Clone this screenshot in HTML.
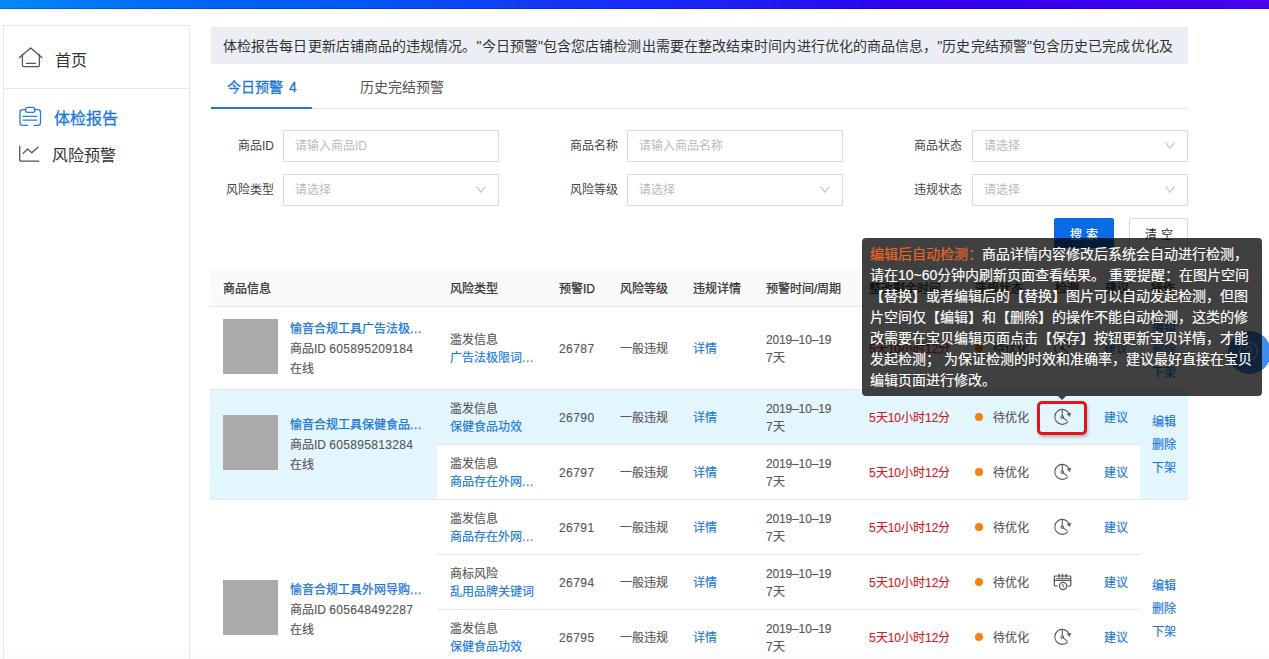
<!DOCTYPE html>
<html lang="zh-CN"><head><meta charset="utf-8">
<style>
html,body{margin:0;padding:0}
body{width:1269px;height:659px;overflow:hidden;position:relative;background:#fff;font-family:"Liberation Sans",sans-serif;color:#333}
.a{position:absolute}
.t{position:absolute;white-space:nowrap}
.f12{font-size:12px;line-height:18px}
.f14{font-size:14px;line-height:20px}
.f16{font-size:16px;line-height:22px}
.blue{color:#1a78d8}
.gray{color:#585858}
.line{position:absolute;height:1px;background:#e8e8e8}
.inp{position:absolute;box-sizing:border-box;height:32px;width:216px;border:1px solid #dcdcdc;background:#fff}
.ph{position:absolute;left:11px;top:7px;font-size:12px;line-height:16px;color:#bbb;white-space:nowrap}
.chev{position:absolute;right:12px;top:11px;width:10px;height:8px}
.img{position:absolute;width:55px;height:55px;background:#aaa}
.red{color:#d01c28}
.dot{position:absolute;width:8px;height:8px;border-radius:50%;background:#f8800e}
.th{margin-top:1px;font-size:12px;line-height:20px;color:#333;-webkit-text-stroke:0.25px #333}
.td{margin-top:1px;font-size:12px;line-height:20px;-webkit-text-stroke:0.15px currentColor}
.med{-webkit-text-stroke:0.3px currentColor}
.title{color:#1b74d4;-webkit-text-stroke:0.25px #1b74d4}
</style></head>
<body>
<!-- top gradient bar -->
<div class="a" style="left:0;top:0;width:1269px;height:9px;background:linear-gradient(90deg,rgb(0,136,245) 0%,rgb(0,100,248) 16%,rgb(0,88,250) 28%,rgb(21,53,245) 44%,rgb(26,34,245) 57%,rgb(48,0,240) 71%,rgb(56,0,239) 83%,rgb(74,0,240) 100%)"></div>

<div class="a" style="left:0;top:8px;width:1269px;height:1px;background:rgba(0,0,40,0.22)"></div>
<div class="a" style="left:0;top:9px;width:1269px;height:1px;background:#f2fdff"></div>
<!-- sidebar -->
<div class="a" style="left:3px;top:25px;width:185px;height:660px;border:1px solid #e8e8e8;box-sizing:content-box"></div>
<div class="line" style="left:4px;top:88px;width:185px"></div>

<svg class="a" style="left:0;top:0" width="200" height="200" viewBox="0 0 200 200">
  <!-- house -->
  <g fill="none" stroke="#555" stroke-width="1.3" stroke-linecap="round" stroke-linejoin="round">
    <path d="M19.5 57.5 L30.7 48 L41.8 57.5"/>
    <path d="M22.4 54.5 V65 Q22.4 66.6 24 66.6 H37.8 Q39.4 66.6 39.4 65 V54.5"/>
    <path d="M26.3 63.4 H35.4"/>
  </g>
  <!-- clipboard (blue) -->
  <g fill="none" stroke="#2a7bd3" stroke-width="1.3" stroke-linecap="round" stroke-linejoin="round">
    <path d="M25.5 109.6 H22.6 Q20 109.6 20 112.2 V122.7 Q20 125.3 22.6 125.3 H27.7"/>
    <path d="M34.9 109.6 H37.9 Q40.5 109.6 40.5 112.2 V122.7 Q40.5 125.3 37.9 125.3 H33.9"/>
    <rect x="25.5" y="107.4" width="9.5" height="5" rx="2.5"/>
    <path d="M23.2 116.4 H36.9 M23.2 120.1 H36.9"/>
  </g>
  <!-- trend -->
  <g fill="none" stroke="#555" stroke-width="1.3" stroke-linecap="round" stroke-linejoin="round">
    <path d="M19.7 146.3 V159.2 Q19.7 161.2 21.7 161.2 H38.8"/>
    <path d="M23.3 153.4 L27.5 148.9 L31.8 152.7 L38 147.2"/>
  </g>
</svg>
<div class="t f16" style="left:55px;top:50px">首页</div>
<div class="t f16 blue med" style="left:54px;top:108px">体检报告</div>
<div class="t f16" style="left:52px;top:145px">风险预警</div>

<!-- notice -->
<div class="a" style="left:211px;top:27px;width:977px;height:37px;background:#ebeff5;overflow:hidden">
  <div class="t f14" style="left:12px;top:9px;color:#333;letter-spacing:0.085px">体检报告每日更新店铺商品的违规情况。"今日预警"包含您店铺检测出需要在整改结束时间内进行优化的商品信息，"历史完结预警"包含历史已完成优化及</div>
</div>

<!-- tabs -->
<div class="line" style="left:210px;top:108px;width:978px"></div>
<div class="a" style="left:211px;top:107px;width:101px;height:2px;background:#1f78d1"></div>
<div class="t f14 blue med" style="left:227px;top:77px">今日预警<span style="margin-left:6px">4</span></div>
<div class="t f14" style="left:360px;top:77px;color:#555">历史完结预警</div>

<!-- form -->
<div class="t f12" style="right:995px;top:137px;color:#444">商品ID</div>
<div class="inp" style="left:283px;top:130px"><div class="ph">请输入商品ID</div></div>
<div class="t f12" style="right:651px;top:137px;color:#444">商品名称</div>
<div class="inp" style="left:627px;top:130px"><div class="ph">请输入商品名称</div></div>
<div class="t f12" style="right:307px;top:137px;color:#444">商品状态</div>
<div class="inp" style="left:972px;top:130px"><div class="ph">请选择</div><svg class="chev" viewBox="0 0 10 8"><path d="M0.6 0.4 L5 6.4 L9.4 0.4" fill="none" stroke="#c4c4c4" stroke-width="1.1"/></svg></div>

<div class="t f12" style="right:995px;top:181px;color:#444">风险类型</div>
<div class="inp" style="left:283px;top:174px"><div class="ph">请选择</div><svg class="chev" viewBox="0 0 10 8"><path d="M0.6 0.4 L5 6.4 L9.4 0.4" fill="none" stroke="#c4c4c4" stroke-width="1.1"/></svg></div>
<div class="t f12" style="right:651px;top:181px;color:#444">风险等级</div>
<div class="inp" style="left:627px;top:174px"><div class="ph">请选择</div><svg class="chev" viewBox="0 0 10 8"><path d="M0.6 0.4 L5 6.4 L9.4 0.4" fill="none" stroke="#c4c4c4" stroke-width="1.1"/></svg></div>
<div class="t f12" style="right:307px;top:181px;color:#444">违规状态</div>
<div class="inp" style="left:972px;top:174px"><div class="ph">请选择</div><svg class="chev" viewBox="0 0 10 8"><path d="M0.6 0.4 L5 6.4 L9.4 0.4" fill="none" stroke="#c4c4c4" stroke-width="1.1"/></svg></div>

<!-- buttons -->
<div class="a" style="left:1054px;top:218px;width:60px;height:30px;background:#0a6be6;border-radius:2px"></div>
<div class="t f12" style="-webkit-text-stroke:0.2px #fff;left:1054px;top:226px;width:60px;text-align:center;color:#fff;letter-spacing:4px;text-indent:4px">搜索</div>
<div class="a" style="left:1129px;top:218px;width:59px;height:30px;box-sizing:border-box;border:1px solid #d9d9d9;border-radius:2px;background:#fff"></div>
<div class="t f12" style="left:1129px;top:226px;width:59px;text-align:center;color:#333;letter-spacing:4px;text-indent:4px">清空</div>

<!-- TABLE -->
<!-- header -->
<div class="a" style="left:210px;top:269px;width:978px;height:37px;background:#fafafa"></div>
<div class="line" style="left:210px;top:306px;width:978px"></div>
<div class="t th" style="left:223px;top:278px">商品信息</div>
<div class="t th" style="left:450px;top:278px">风险类型</div>
<div class="t th" style="left:559px;top:278px">预警ID</div>
<div class="t th" style="left:620px;top:278px">风险等级</div>
<div class="t th" style="left:693px;top:278px">违规详情</div>
<div class="t th" style="left:766px;top:278px">预警时间/周期</div>
<div class="t th" style="left:869px;top:278px">整改剩余时间</div>
<div class="t th" style="left:975px;top:278px">违规状态</div>
<div class="t th" style="left:1055px;top:278px">检测</div>
<div class="t th" style="left:1105px;top:278px">建议</div>
<div class="t th" style="left:1151px;top:278px">操作</div>

<!-- row 1 -->
<div class="line" style="left:210px;top:389px;width:978px"></div>
<div class="img" style="left:223px;top:319px"></div>
<div class="t td title" style="left:290px;top:318px">愉音合规工具广告法极<span style="letter-spacing:0.7px">...</span></div>
<div class="t td gray" style="left:290px;top:338px">商品ID <span style="letter-spacing:0.32px">605895209184</span></div>
<div class="t td gray" style="left:290px;top:358px">在线</div>
<div class="t td gray" style="left:450px;top:329px">滥发信息</div>
<div class="t td blue" style="left:450px;top:347px">广告法极限词<span style="letter-spacing:0.7px">...</span></div>
<div class="t td gray" style="left:559px;top:338px;letter-spacing:0.45px">26787</div>
<div class="t td gray" style="left:620px;top:338px">一般违规</div>
<div class="t td blue" style="left:693px;top:338px">详情</div>
<div class="t td gray" style="left:766px;top:329px;letter-spacing:-0.15px">2019–10–19</div>
<div class="t td gray" style="left:766px;top:347px">7天</div>
<div class="t td red" style="left:869px;top:338px">5天10小时12分</div>
<div class="dot" style="left:975px;top:344px"></div>
<div class="t td gray" style="left:993px;top:338px">待优化</div>
<div class="t td blue" style="left:1104px;top:338px">建议</div>
<div class="t td blue" style="left:1152px;top:316px">编辑</div>
<div class="t td blue" style="left:1152px;top:339px">删除</div>
<div class="t td blue" style="left:1152px;top:362px">下架</div>

<!-- group 2 -->
<div class="a" style="left:210px;top:390px;width:227px;height:109px;background:#e3f6fd"></div>
<div class="a" style="left:437px;top:390px;width:703px;height:54px;background:#e3f6fd"></div>
<div class="a" style="left:1140px;top:390px;width:48px;height:109px;background:#e3f6fd"></div>
<div class="line" style="left:437px;top:444px;width:703px"></div>
<div class="line" style="left:210px;top:499px;width:978px"></div>
<div class="img" style="left:223px;top:415px"></div>
<div class="t td title" style="left:290px;top:414px">愉音合规工具保健食品<span style="letter-spacing:0.7px">...</span></div>
<div class="t td gray" style="left:290px;top:434px">商品ID <span style="letter-spacing:0.32px">605895813284</span></div>
<div class="t td gray" style="left:290px;top:454px">在线</div>
<!-- sub1 -->
<div class="t td gray" style="left:450px;top:398px">滥发信息</div>
<div class="t td blue" style="left:450px;top:416px">保健食品功效</div>
<div class="t td gray" style="left:559px;top:407px;letter-spacing:0.45px">26790</div>
<div class="t td gray" style="left:620px;top:407px">一般违规</div>
<div class="t td blue" style="left:693px;top:407px">详情</div>
<div class="t td gray" style="left:766px;top:398px;letter-spacing:-0.15px">2019–10–19</div>
<div class="t td gray" style="left:766px;top:416px">7天</div>
<div class="t td red" style="left:869px;top:407px">5天10小时12分</div>
<div class="dot" style="left:975px;top:413px"></div>
<div class="t td gray" style="left:993px;top:407px">待优化</div>
<div class="t td blue" style="left:1104px;top:407px">建议</div>
<!-- sub2 -->
<div class="t td gray" style="left:450px;top:453px">滥发信息</div>
<div class="t td blue" style="left:450px;top:471px">商品存在外网<span style="letter-spacing:0.7px">...</span></div>
<div class="t td gray" style="left:559px;top:462px;letter-spacing:0.45px">26797</div>
<div class="t td gray" style="left:620px;top:462px">一般违规</div>
<div class="t td blue" style="left:693px;top:462px">详情</div>
<div class="t td gray" style="left:766px;top:453px;letter-spacing:-0.15px">2019–10–19</div>
<div class="t td gray" style="left:766px;top:471px">7天</div>
<div class="t td red" style="left:869px;top:462px">5天10小时12分</div>
<div class="dot" style="left:975px;top:468px"></div>
<div class="t td gray" style="left:993px;top:462px">待优化</div>
<div class="t td blue" style="left:1104px;top:462px">建议</div>
<div class="t td blue" style="left:1152px;top:411px">编辑</div>
<div class="t td blue" style="left:1152px;top:434px">删除</div>
<div class="t td blue" style="left:1152px;top:457px">下架</div>

<!-- group 3 -->
<div class="line" style="left:437px;top:554px;width:703px"></div>
<div class="line" style="left:437px;top:609px;width:703px"></div>
<div class="img" style="left:223px;top:580px"></div>
<div class="t td title" style="left:290px;top:579px">愉音合规工具外网导购<span style="letter-spacing:0.7px">...</span></div>
<div class="t td gray" style="left:290px;top:599px">商品ID <span style="letter-spacing:0.32px">605648492287</span></div>
<div class="t td gray" style="left:290px;top:619px">在线</div>
<!-- sub1 -->
<div class="t td gray" style="left:450px;top:508px">滥发信息</div>
<div class="t td blue" style="left:450px;top:526px">商品存在外网<span style="letter-spacing:0.7px">...</span></div>
<div class="t td gray" style="left:559px;top:517px;letter-spacing:0.45px">26791</div>
<div class="t td gray" style="left:620px;top:517px">一般违规</div>
<div class="t td blue" style="left:693px;top:517px">详情</div>
<div class="t td gray" style="left:766px;top:508px;letter-spacing:-0.15px">2019–10–19</div>
<div class="t td gray" style="left:766px;top:526px">7天</div>
<div class="t td red" style="left:869px;top:517px">5天10小时12分</div>
<div class="dot" style="left:975px;top:523px"></div>
<div class="t td gray" style="left:993px;top:517px">待优化</div>
<div class="t td blue" style="left:1104px;top:517px">建议</div>
<!-- sub2 -->
<div class="t td gray" style="left:450px;top:563px">商标风险</div>
<div class="t td blue" style="left:450px;top:581px">乱用品牌关键词</div>
<div class="t td gray" style="left:559px;top:572px;letter-spacing:0.45px">26794</div>
<div class="t td gray" style="left:620px;top:572px">一般违规</div>
<div class="t td blue" style="left:693px;top:572px">详情</div>
<div class="t td gray" style="left:766px;top:563px;letter-spacing:-0.15px">2019–10–19</div>
<div class="t td gray" style="left:766px;top:581px">7天</div>
<div class="t td red" style="left:869px;top:572px">5天10小时12分</div>
<div class="dot" style="left:975px;top:578px"></div>
<div class="t td gray" style="left:993px;top:572px">待优化</div>
<div class="t td blue" style="left:1104px;top:572px">建议</div>
<!-- sub3 -->
<div class="t td gray" style="left:450px;top:618px">滥发信息</div>
<div class="t td blue" style="left:450px;top:636px">保健食品功效</div>
<div class="t td gray" style="left:559px;top:627px;letter-spacing:0.45px">26795</div>
<div class="t td gray" style="left:620px;top:627px">一般违规</div>
<div class="t td blue" style="left:693px;top:627px">详情</div>
<div class="t td gray" style="left:766px;top:618px;letter-spacing:-0.15px">2019–10–19</div>
<div class="t td gray" style="left:766px;top:636px">7天</div>
<div class="t td red" style="left:869px;top:627px">5天10小时12分</div>
<div class="dot" style="left:975px;top:633px"></div>
<div class="t td gray" style="left:993px;top:627px">待优化</div>
<div class="t td blue" style="left:1104px;top:627px">建议</div>
<div class="t td blue" style="left:1152px;top:575px">编辑</div>
<div class="t td blue" style="left:1152px;top:598px">删除</div>
<div class="t td blue" style="left:1152px;top:621px">下架</div>


<svg class="a" style="left:0;top:0" width="1269" height="659" viewBox="0 0 1269 659">
 <defs>
  <g id="clk" fill="none" stroke="#5a5a5a" stroke-width="1.1" stroke-linecap="round" stroke-linejoin="round">
   <path d="M5.3 5.2 A7.5 7.5 0 1 1 6.6 -3.6"/>
   <path d="M5.2 -2.9 L8.5 -3.8 L7.3 -0.7 Z" fill="#5a5a5a" stroke-width="0.7"/>
   <path d="M0 -7 V-1.3"/>
   <circle cx="0" cy="0" r="1.3"/>
   <path d="M0.9 0.9 L4.6 3.6"/>
  </g>
  <g id="cal" fill="none" stroke="#555" stroke-width="1.2" stroke-linecap="round" stroke-linejoin="round">
   <path d="M-5.3 10 H-7.2 Q-8.2 10 -8.2 9 V1 Q-8.2 0 -7.2 0 H7.3 Q8.3 0 8.3 1 V9 Q8.3 10 7.3 10 H5.3"/>
   <path d="M-6 2.6 H7" stroke-width="0.9"/>
   <path d="M-8.2 4.4 H8.3"/>
   <path d="M-3.5 -1.6 V1 M0 -1.6 V1 M3.7 -1.6 V1" stroke-width="1.4"/>
   <circle cx="0.6" cy="10" r="3.6"/>
   <path d="M0.4 8.3 V10.2 L1.6 11.3" stroke-width="1"/>
  </g>
 </defs>
 <use href="#clk" x="1062.3" y="348"/>
 <use href="#clk" x="1062.3" y="417"/>
 <use href="#clk" x="1062.3" y="472"/>
 <use href="#clk" x="1062.3" y="527"/>
 <use href="#cal" x="1062.5" y="576"/>
 <use href="#clk" x="1062.3" y="637"/>
</svg>
<!-- red highlight -->
<div class="a" style="left:1037px;top:401px;width:50px;height:34px;box-sizing:border-box;border:3px solid #e4141b;border-radius:5px;box-shadow:1px 2px 3px rgba(0,0,0,0.25)"></div>



<div class="a" style="left:0;top:650px;width:1269px;height:9px;background:rgba(0,0,0,0.012)"></div>
<!-- help button -->
<div class="a" style="left:1228px;top:331px;width:43px;height:43px;border-radius:50%;background:#3d8ef0"></div>
<svg class="a" style="left:1226px;top:331px" width="43" height="43" viewBox="0 0 43 43">
 <g fill="none" stroke="rgba(255,255,255,0.75)" stroke-width="1.3" stroke-linecap="round">
  <circle cx="22.5" cy="20.5" r="9"/>
  <path d="M19.7 18.3 Q19.7 15.6 22.5 15.6 Q25.3 15.6 25.3 18.2 Q25.3 20 22.5 21.2 V23"/>
 </g>
</svg>
<!-- tooltip -->
<div class="a" style="left:862px;top:238px;width:400px;height:158px;background:rgba(0,0,0,0.75);border-radius:4px"></div>
<div class="a" style="left:1058px;top:396px;width:0;height:0;border-left:4px solid transparent;border-right:4px solid transparent;border-top:4px solid rgba(0,0,0,0.75)"></div>
<div class="t" style="left:870px;top:244px;font-size:14px;line-height:21px;color:#fff;-webkit-text-stroke:0.15px currentColor"><span style="color:#ef6626">编辑后自动检测：</span>商品详情内容修改后系统会自动进行检测，<br>请在10~60分钟内刷新页面查看结果。 重要提醒：在图片空间<br>【替换】或者编辑后的【替换】图片可以自动发起检测，但图<br>片空间仅【编辑】和【删除】的操作不能自动检测，这类的修<br>改需要在宝贝编辑页面点击【保存】按钮更新宝贝详情，才能<br>发起检测； 为保证检测的时效和准确率，建议最好直接在宝贝<br>编辑页面进行修改。</div>
</body></html>
